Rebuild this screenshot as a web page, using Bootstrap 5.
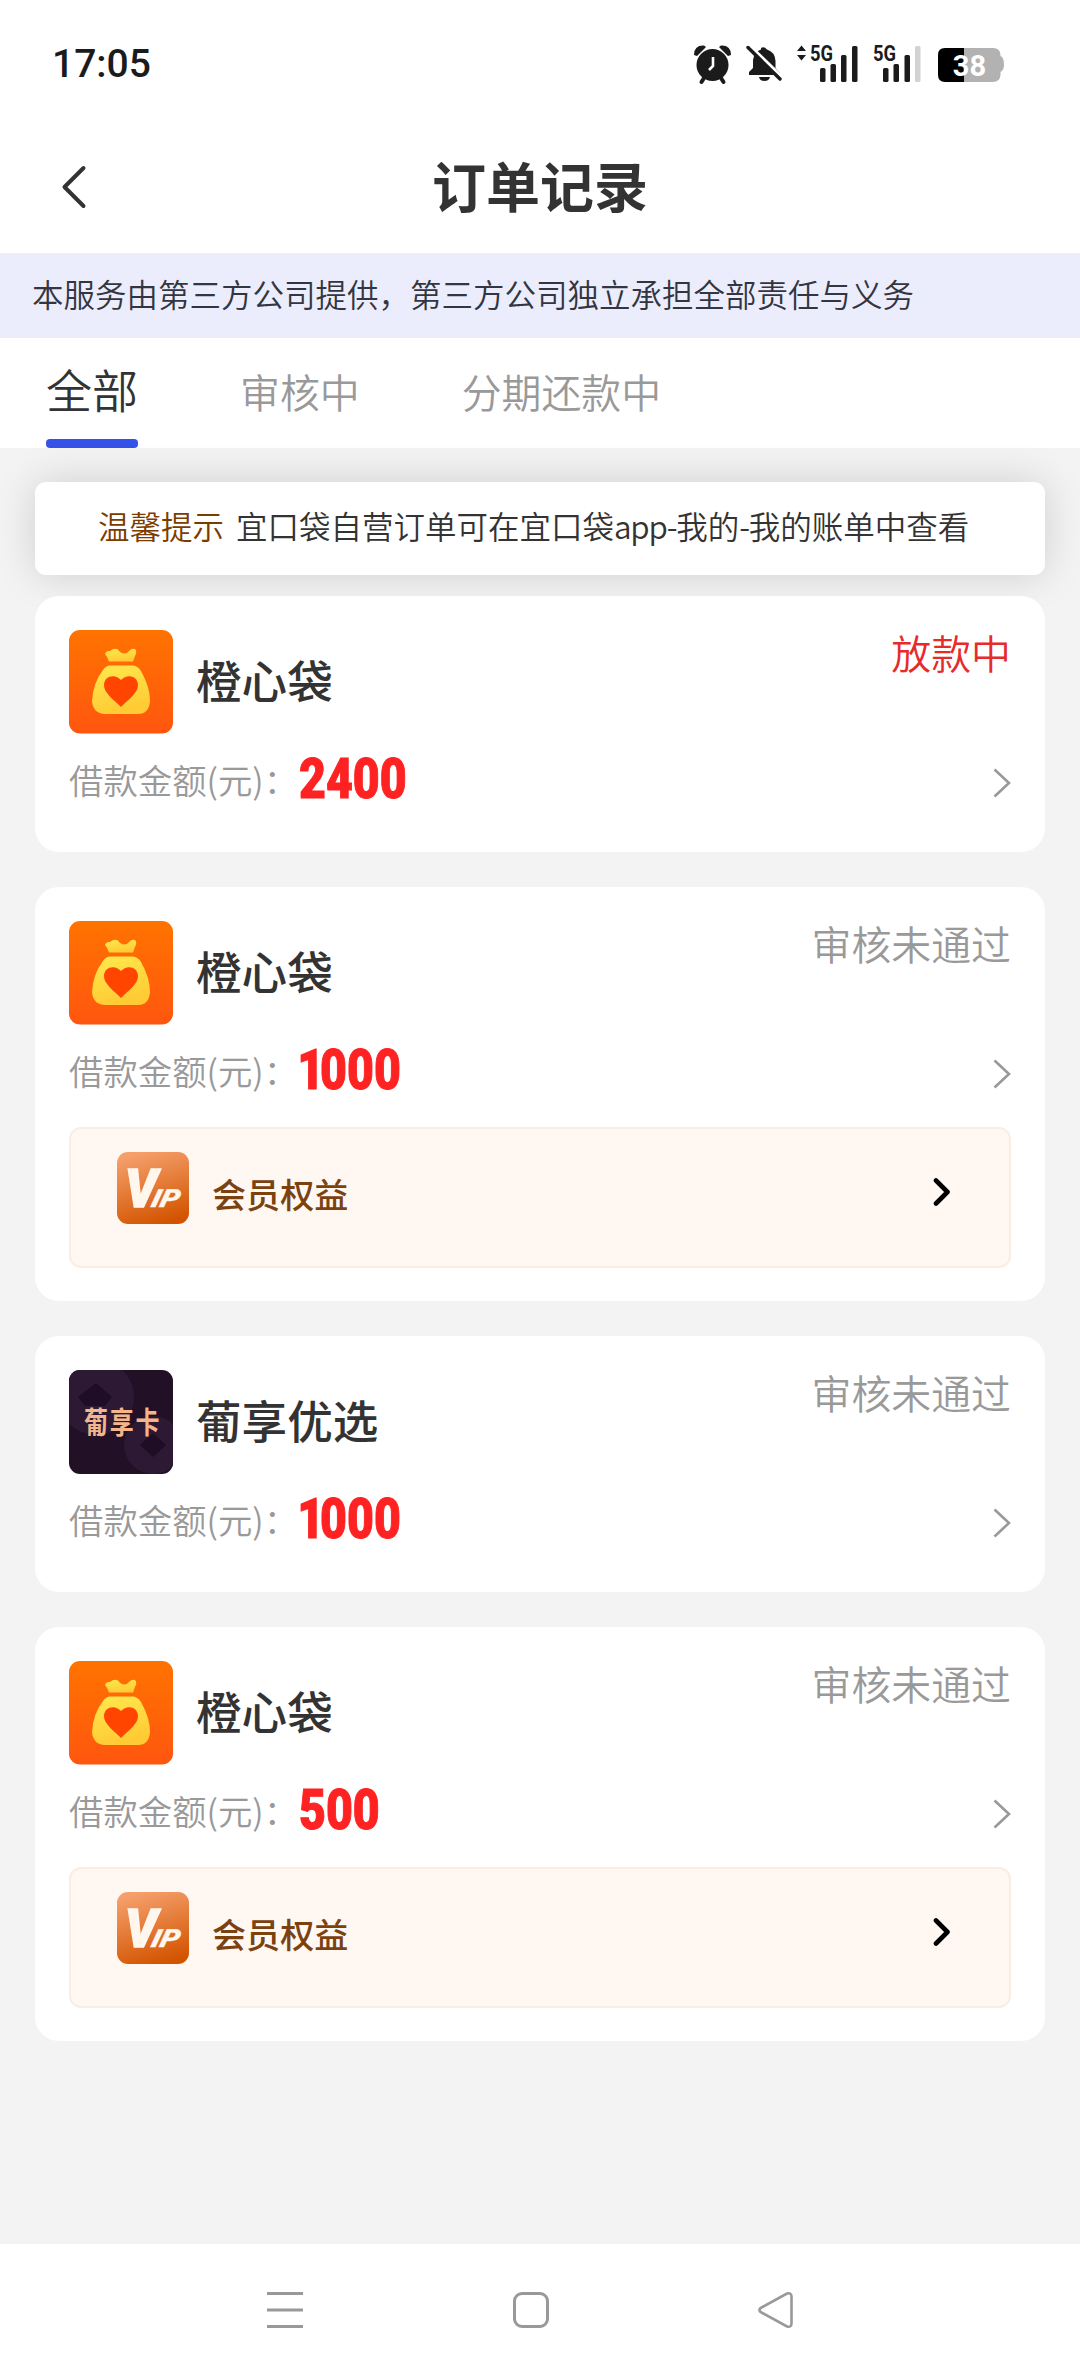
<!DOCTYPE html>
<html lang="zh-CN">
<head>
<meta charset="utf-8">
<meta name="viewport" content="width=device-width, initial-scale=1">
<title>订单记录</title>
<link rel="stylesheet" href="https://cdn.jsdelivr.net/npm/bootstrap@5.3.0/dist/css/bootstrap.min.css">
<style>
  body { font-family: "Noto Sans CJK SC", sans-serif; background: #f3f3f3; color: #333; line-height: 1; font-weight: 350; }
  svg { display: block; flex: none; }
  .screen { width: 1080px; height: 2376px; overflow: hidden; }
  .statusbar { height: 126px; padding: 2px 76px 0 52px; }
  .clock { font: 500 39px/1 Roboto, sans-serif; color: #1b1b1b; }
  .topbar { height: 127px; padding: 0 60px 5px; }
  .page-title { font-size: 54px; font-weight: 700; line-height: 1; padding-bottom: 4px; }
  .side { width: 28px; }
  .notice { height: 85px; padding: 0 0 3px 32px; background: #ebedfd; font-size: 31.5px; color: #333540; }
  .tabs { height: 110px; padding: 0 46px; gap: 102px; font-size: 39.9px; color: #999; }
  .tab-item { padding-top: 33px; line-height: 40px; }
  .tab-item.on { font-size: 46px; color: #333; padding-top: 30px; }
  .tab-line { height: 9px; border-radius: 4px; background: #3451e8; }
  .feed { padding: 34px 35px 0; }
  .tip { height: 93px; border-radius: 11px; padding: 0 0 5px 63px; margin-bottom: 21px; box-shadow: 0 0 40px rgba(0,0,0,.15); font-size: 31.5px; gap: 12px; }
  .latin { letter-spacing: -1.3px; }
  .tip-label { color: #7b3c00; }
  .order { border-radius: 24px; padding: 34px 34px 0; height: 256px; margin-bottom: 35px; }
  .order.tall { height: 414px; }
  .order-name { font-size: 45.6px; font-weight: 500; margin-left: 23px; padding-bottom: 4px; }
  .state { font-size: 39.9px; color: #999; padding-top: 2px; }
  .state.live { color: #e62b2b; }
  .amount-row { height: 72px; margin-top: 13px; }
  .amount-label { font-size: 34.4px; color: #999; padding-bottom: 8px; }
  .amount { font: 900 55px/1 Roboto, sans-serif; color: #ff2222; -webkit-text-stroke: 1px #ff2222; transform: scaleX(.845); transform-origin: left center; margin-left: 1px; padding-bottom: 7px; }
  .digit-one { margin: 0 -5px 0 -2px; }
  .vip { height: 141px; margin-top: 17px; border: 2px solid #f9ede4; border-radius: 12px; background: #fff7f1; padding: 23px 58px 0 46px; }
  .vip-text { font-size: 34.1px; font-weight: 500; color: #7b4210; margin-left: 23px; }
  .sysbar { height: 132px; padding: 0 286px 0 267px; }
</style>
</head>
<body>
<svg width="0" height="0" class="position-absolute">
  <defs>
    <linearGradient id="orange" x1="0" y1="0" x2="0" y2="1"><stop offset="0" stop-color="#ff7300"/><stop offset="1" stop-color="#ff560f"/></linearGradient>
    <linearGradient id="gold" x1="0" y1="0" x2=".3" y2="1"><stop offset="0" stop-color="#ffe94d"/><stop offset="1" stop-color="#ffcb35"/></linearGradient>
    <linearGradient id="copper" x1=".3" y1="0" x2=".6" y2="1"><stop offset="0" stop-color="#f5a06c"/><stop offset="1" stop-color="#d35400"/></linearGradient>
    <clipPath id="logoClip"><rect width="104" height="104" rx="11"/></clipPath>
  </defs>
  <symbol id="bag" viewBox="0 0 104 104">
    <rect width="104" height="103.500" rx="11" fill="url(#orange)"/>
    <path d="M36 24Q37 20.500 41 21Q45 17.500 49 19.500C52 24 57 25 60 21Q64 17 67 20Q68 23 66 26L64 31.500H40Q38 26 36 24Z" fill="url(#gold)"/>
    <path d="M41 35.500H64Q69 36 72 41Q81 57 81 71Q80 84 69 84H35Q24 83 23 71Q24 53 34 40Q37 35.500 41 35.500Z" fill="url(#gold)"/>
    <path d="M52 77C44 69 35 63 35 55C35 46 46 43 52 50C58 43 69 46 69 55C69 63 60 69 52 77Z" fill="#ff4500"/>
  </symbol>
  <symbol id="next" viewBox="0 0 18 30"><path d="M1.500 1.500L16 15L1.500 28.500" fill="none" stroke="#999" stroke-width="2.600"/></symbol>
  <symbol id="nextBold" viewBox="0 0 18 30"><path d="M3 2.500L14.500 14L3 25.500" fill="none" stroke="#000" stroke-width="4.600" stroke-linecap="round" stroke-linejoin="round"/></symbol>
</svg>

<div class="screen d-flex flex-column">
  <div class="statusbar bg-white d-flex align-items-center justify-content-between">
    <span class="clock">17:05</span>
    <svg width="312" height="44" viewBox="692 42 312 44">
      <g fill="#1b1b1b">
        <circle cx="712.500" cy="65" r="16"/>
        <path d="M694 55Q694 45 704 45.500L706 47L697 56Z M731 55Q731 45 721 45.500L719 47L728 56Z"/>
        <path d="M704 78L701.500 82M721 78L723.500 82" stroke="#1b1b1b" stroke-width="4" stroke-linecap="round"/>
        <path d="M749 75V72L753 68V60Q754 52 761 49.500V48Q764 46 767 49.500Q775 52 775.500 61V68L780 73V75Z"/>
        <path d="M759 77H770Q769 81 764.500 81Q760 81 759 77Z"/>
        <path d="M750 46L784 79" stroke="#fff" stroke-width="3.500"/>
        <path d="M748 47.500L780 79" stroke="#1b1b1b" stroke-width="3.400" stroke-linecap="round"/>
        <path d="M797 51L801.500 45.500L806 51Z M797 55H806L801.500 60.500Z"/>
        <rect x="820" y="68" width="5.500" height="14" rx="1.500"/><rect x="830.500" y="64" width="5.500" height="18" rx="1.500"/><rect x="841" y="55" width="5.500" height="27" rx="1.500"/><rect x="852" y="46" width="5.500" height="36" rx="1.500"/>
        <rect x="883" y="68" width="5.500" height="14" rx="1.500"/><rect x="893.500" y="64" width="5.500" height="18" rx="1.500"/><rect x="904.500" y="55" width="5.500" height="27" rx="1.500"/>
        <g font-family="Roboto, sans-serif" font-weight="700" font-size="22">
          <text x="810" y="61" textLength="23" lengthAdjust="spacingAndGlyphs">5G</text>
          <text x="873" y="61" textLength="23" lengthAdjust="spacingAndGlyphs">5G</text>
        </g>
      </g>
      <rect x="915" y="46" width="5.500" height="36" rx="1.500" fill="#d2d2d2"/>
      <path d="M713 57V66L709 70" fill="none" stroke="#fff" stroke-width="2.600"/>
      <path d="M964 48H993Q1000 48 1000.500 55V56Q1004 57 1004 65Q1004 70 1000.500 72V75Q1000 82 993 82H964Z" fill="#b2b2b2"/>
      <path d="M964 48H945Q938 48 938 55V75Q938 82 945 82H964Z" fill="#000"/>
      <text x="969.500" y="75.500" text-anchor="middle" font-family="Roboto, sans-serif" font-weight="700" font-size="29" fill="#fff">38</text>
    </svg>
  </div>

  <header class="topbar bg-white d-flex align-items-center justify-content-between">
    <svg class="side" width="28" height="46" viewBox="0 0 28 46"><path d="M23.500 4L4.500 23L23.500 42" fill="none" stroke="#333" stroke-width="4" stroke-linecap="round" stroke-linejoin="round"/></svg>
    <h1 class="page-title m-0">订单记录</h1>
    <span class="side"></span>
  </header>

  <div class="notice d-flex align-items-center text-nowrap">本服务由第三方公司提供，第三方公司独立承担全部责任与义务</div>

  <nav class="tabs bg-white d-flex">
    <div class="d-flex flex-column justify-content-between"><div class="tab-item on">全部</div><div class="tab-line"></div></div>
    <div class="tab-item">审核中</div>
    <div class="tab-item">分期还款中</div>
  </nav>

  <main class="feed flex-grow-1">
    <div class="tip bg-white d-flex align-items-center text-nowrap"><span class="tip-label">温馨提示</span><span>宜口袋自营订单可在宜口袋<span class="latin">app-</span>我的<span class="latin">-</span>我的账单中查看</span></div>

    <section class="order bg-white">
      <div class="d-flex align-items-start justify-content-between">
        <div class="d-flex align-items-center"><svg width="104" height="104"><use href="#bag"/></svg><span class="order-name">橙心袋</span></div>
        <span class="state live">放款中</span>
      </div>
      <div class="amount-row d-flex align-items-center"><span class="amount-label">借款金额(元)：</span><span class="amount">2400</span><svg class="ms-auto" width="18" height="30"><use href="#next"/></svg></div>
    </section>

    <section class="order tall bg-white">
      <div class="d-flex align-items-start justify-content-between">
        <div class="d-flex align-items-center"><svg width="104" height="104"><use href="#bag"/></svg><span class="order-name">橙心袋</span></div>
        <span class="state">审核未通过</span>
      </div>
      <div class="amount-row d-flex align-items-center"><span class="amount-label">借款金额(元)：</span><span class="amount"><span class="digit-one">1</span>000</span><svg class="ms-auto" width="18" height="30"><use href="#next"/></svg></div>
      <div class="vip d-flex align-items-start">
        <svg width="72" height="72" viewBox="0 0 72 72">
          <rect width="72" height="72" rx="11" fill="url(#copper)"/>
          <g fill="#fff7ee" stroke="#fff7ee" font-family="Roboto, sans-serif" font-weight="900" font-style="italic">
            <text transform="translate(8 55) scale(.95 1)" font-size="53" stroke-width="1.500">V</text>
            <text transform="translate(33 55) scale(1.200 1) skewX(-12)" font-size="25" stroke-width=".3">IP</text>
          </g>
        </svg>
        <div class="d-flex align-items-center flex-grow-1 pt-4"><span class="vip-text">会员权益</span><svg class="ms-auto" width="18" height="30"><use href="#nextBold"/></svg></div>
      </div>
    </section>

    <section class="order bg-white">
      <div class="d-flex align-items-start justify-content-between">
        <div class="d-flex align-items-center">
          <svg width="104" height="104" viewBox="0 0 104 104">
            <g clip-path="url(#logoClip)">
              <rect width="104" height="104" fill="#221026"/>
              <circle cx="27" cy="27" r="38" fill="#2d1933"/>
              <path d="M27 13L43 27L36 36H16L9 27Z" fill="#1e0d24"/>
              <circle cx="84" cy="75" r="29" fill="#2d1933"/>
              <path d="M84 63L97 75L84 87L71 75Z" fill="#1e0d24"/>
            </g>
            <text transform="translate(15 63) scale(1 1.220)" font-size="24" font-weight="700" fill="#f3b68c" letter-spacing="1.800" font-family="Noto Sans CJK SC, sans-serif">葡享卡</text>
          </svg>
          <span class="order-name">葡享优选</span></div>
        <span class="state">审核未通过</span>
      </div>
      <div class="amount-row d-flex align-items-center"><span class="amount-label">借款金额(元)：</span><span class="amount"><span class="digit-one">1</span>000</span><svg class="ms-auto" width="18" height="30"><use href="#next"/></svg></div>
    </section>

    <section class="order tall bg-white">
      <div class="d-flex align-items-start justify-content-between">
        <div class="d-flex align-items-center"><svg width="104" height="104"><use href="#bag"/></svg><span class="order-name">橙心袋</span></div>
        <span class="state">审核未通过</span>
      </div>
      <div class="amount-row d-flex align-items-center"><span class="amount-label">借款金额(元)：</span><span class="amount">500</span><svg class="ms-auto" width="18" height="30"><use href="#next"/></svg></div>
      <div class="vip d-flex align-items-start">
        <svg width="72" height="72" viewBox="0 0 72 72">
          <rect width="72" height="72" rx="11" fill="url(#copper)"/>
          <g fill="#fff7ee" stroke="#fff7ee" font-family="Roboto, sans-serif" font-weight="900" font-style="italic">
            <text transform="translate(8 55) scale(.95 1)" font-size="53" stroke-width="1.500">V</text>
            <text transform="translate(33 55) scale(1.200 1) skewX(-12)" font-size="25" stroke-width=".3">IP</text>
          </g>
        </svg>
        <div class="d-flex align-items-center flex-grow-1 pt-4"><span class="vip-text">会员权益</span><svg class="ms-auto" width="18" height="30"><use href="#nextBold"/></svg></div>
      </div>
    </section>
  </main>

  <footer class="sysbar bg-white d-flex align-items-center justify-content-between">
    <svg width="36" height="38" viewBox="0 0 36 38"><path d="M0 2.500H36M0 19H36M0 35.500H36" stroke="#999" stroke-width="3"/></svg>
    <svg width="36" height="38" viewBox="0 0 36 38"><rect x="1.500" y="2.500" width="33" height="33" rx="7.500" fill="none" stroke="#999" stroke-width="3"/></svg>
    <svg width="36" height="38" viewBox="0 0 36 38"><path d="M2.500 17Q.5 19 2.500 21L29 35.500Q33.500 36.500 33.500 32.500V5.500Q33.500 1.500 29 2.500Z" fill="none" stroke="#999" stroke-width="2.600"/></svg>
  </footer>
</div>
<script src="https://cdn.jsdelivr.net/npm/bootstrap@5.3.0/dist/js/bootstrap.bundle.min.js"></script>
</body>
</html>
